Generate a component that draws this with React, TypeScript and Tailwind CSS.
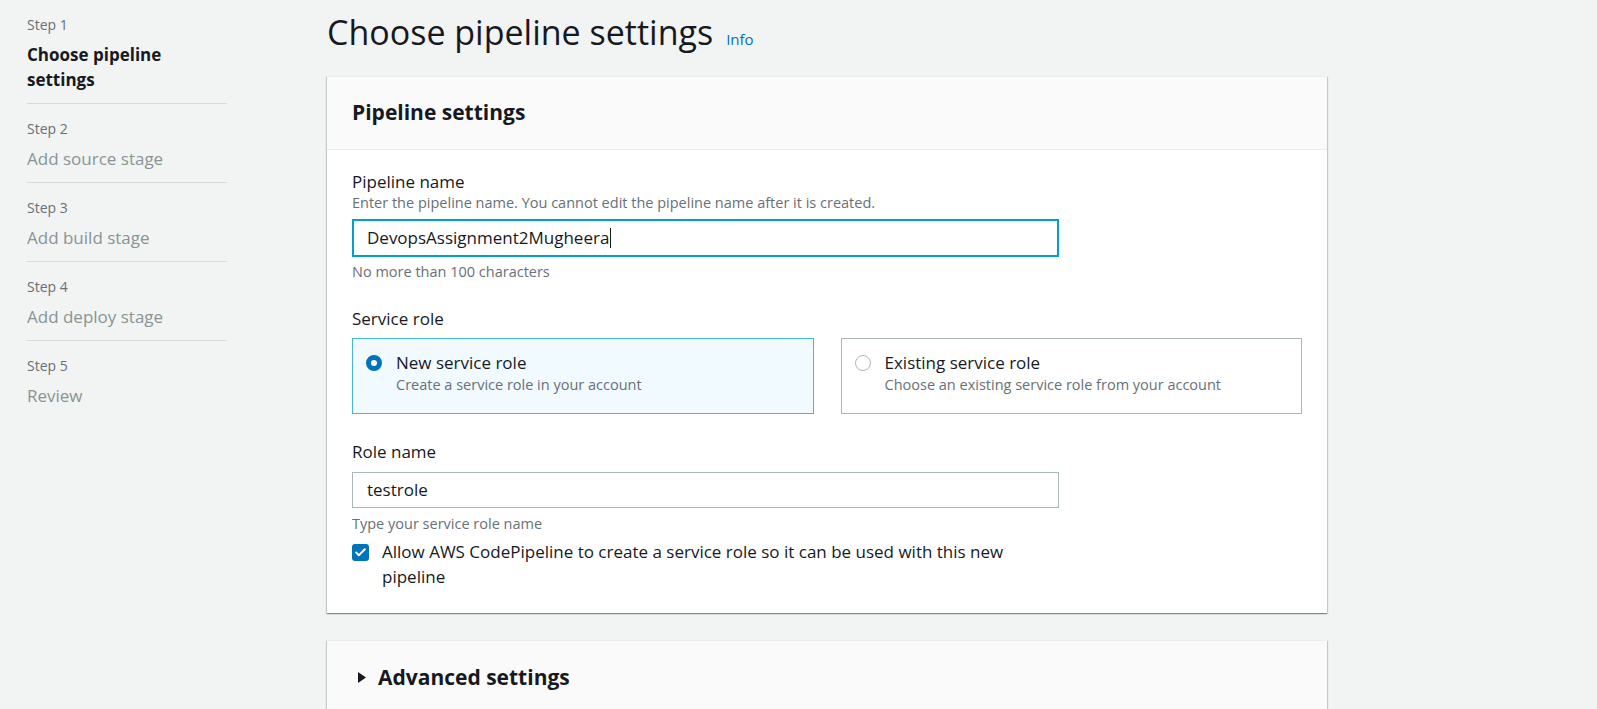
import { Check } from 'lucide-react';

const steps = [
  { step: 'Step 1', title: 'Choose pipeline settings', active: true },
  { step: 'Step 2', title: 'Add source stage', active: false },
  { step: 'Step 3', title: 'Add build stage', active: false },
  { step: 'Step 4', title: 'Add deploy stage', active: false },
  { step: 'Step 5', title: 'Review', active: false },
];

const cardShadow =
  'shadow-[0_1px_1px_0_rgba(0,28,36,0.3),1px_1px_1px_0_rgba(0,28,36,0.15),-1px_1px_1px_0_rgba(0,28,36,0.15)]';

function Sidebar() {
  return (
    <nav className="w-[200px] shrink-0">
      <ul>
        {steps.map((s, i) => (
          <li
            key={s.step}
            className={`pt-[15px] pb-[11px] ${i < steps.length - 1 ? 'border-b border-[#d5dbdb]' : ''}`}
          >
            <p className="text-[14px] leading-5 text-[#687078]">{s.step}</p>
            <p
              className={`mt-[7px] max-w-[170px] text-[17px] leading-[25px] ${
                s.active ? 'font-bold text-[#16191f]' : 'text-[#879596]'
              }`}
            >
              {s.title}
            </p>
          </li>
        ))}
      </ul>
    </nav>
  );
}

function RadioTile({ selected, title, desc }: { selected: boolean; title: string; desc: string }) {
  return (
    <div
      className={`flex h-[76px] items-start gap-[14px] border pl-[13px] pt-[13px] ${
        selected ? 'border-[#44b9d6] bg-[#f1faff]' : 'border-[#aab7b8] bg-white'
      }`}
    >
      <span
        className={`mt-[3px] h-4 w-4 shrink-0 rounded-full ${
          selected ? 'border-[5px] border-[#0073bb] bg-white' : 'border border-[#aab7b8] bg-white'
        }`}
      />
      <div>
        <p className="text-[17px] leading-[22px] text-[#16191f]">{title}</p>
        <p className="mt-px text-[14.5px] leading-5 text-[#687078]">{desc}</p>
      </div>
    </div>
  );
}

export default function App() {
  return (
    <div className="flex h-[709px] gap-[100px] overflow-hidden bg-[#f2f3f3] pl-[27px] font-['Open_Sans',sans-serif] text-[#16191f]">
      <Sidebar />

      <main className="w-[1000px] shrink-0 pt-[10px]">
        <div className="mb-[22px] flex items-baseline gap-[13px]">
          <h1 className="text-[34px] leading-[44px] font-normal">Choose pipeline settings</h1>
          <a className="text-[15px] text-[#0073bb]">Info</a>
        </div>

        {/* Pipeline settings */}
        <section className={`border-t border-[#eaeded] bg-white ${cardShadow}`}>
          <header className="flex h-[73px] items-center border-b border-[#eaeded] bg-[#fafafa] px-[25px]">
            <h2 className="text-[21px] font-bold">Pipeline settings</h2>
          </header>

          <div className="px-[25px] pt-[21px] pb-[24px]">
            <div className="w-[707px]">
              <p className="text-[17px] leading-[22px]">Pipeline name</p>
              <p className="text-[14.5px] leading-5 text-[#687078]">
                Enter the pipeline name. You cannot edit the pipeline name after it is created.
              </p>
              <div className="mt-[6px] flex h-[38px] items-center border-2 border-[#00a1c9] bg-white px-[13px] text-[17px]">
                DevopsAssignment2Mugheera
                <span className="ml-px inline-block h-[20px] w-px bg-[#16191f]" />
              </div>
              <p className="mt-[5px] text-[14.5px] leading-5 text-[#687078]">No more than 100 characters</p>
            </div>

            <p className="mt-[26px] text-[17px] leading-[22px]">Service role</p>
            <div className="mt-[8px] grid grid-cols-2 gap-[27px]">
              <RadioTile selected title="New service role" desc="Create a service role in your account" />
              <RadioTile
                selected={false}
                title="Existing service role"
                desc="Choose an existing service role from your account"
              />
            </div>

            <div className="w-[707px]">
              <p className="mt-[27px] text-[17px] leading-[22px]">Role name</p>
              <div className="mt-[9px] flex h-[36px] items-center border border-[#aab7b8] bg-white px-[14px] text-[17px]">
                testrole
              </div>
              <p className="mt-[6px] text-[14.5px] leading-5 text-[#687078]">Type your service role name</p>

              <label className="mt-[5px] flex items-start gap-[13px]">
                <span className="mt-[5px] flex h-[17px] w-[17px] shrink-0 items-center justify-center rounded-[3px] bg-[#0073bb]">
                  <Check className="h-[13px] w-[13px] text-white" strokeWidth={3.5} />
                </span>
                <span className="w-[650px] text-[17px] leading-[25px]">
                  Allow AWS CodePipeline to create a service role so it can be used with this new pipeline
                </span>
              </label>
            </div>
          </div>
        </section>

        {/* Advanced settings */}
        <section className={`mt-[27px] border-t border-[#eaeded] bg-white ${cardShadow}`}>
          <header className="flex h-[73px] items-center gap-[12px] bg-[#fafafa] pl-[31px]">
            <svg width="8" height="11" viewBox="0 0 8 11" className="text-[#16191f]">
              <path d="M0 0 L8 5.5 L0 11 Z" fill="currentColor" />
            </svg>
            <h2 className="text-[21px] font-bold">Advanced settings</h2>
          </header>
        </section>
      </main>
    </div>
  );
}
